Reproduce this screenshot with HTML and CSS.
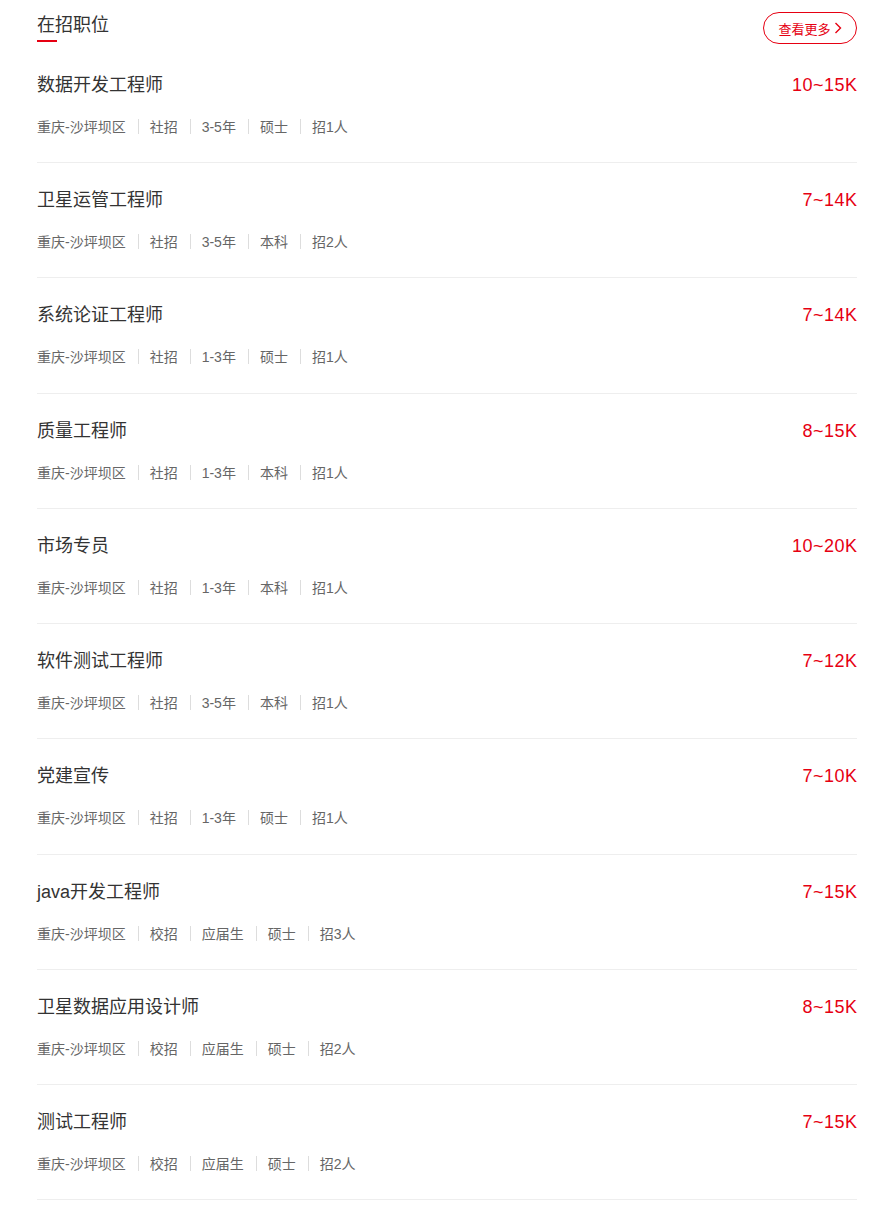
FILE: index.html
```html
<!DOCTYPE html>
<html lang="zh-CN">
<head>
  <meta charset="UTF-8">
  <title>在招职位</title>
  <link rel="stylesheet" href="styles.css">
</head>
<body>
  <div class="jobs">
    <div class="jobs-head">
      <h2 class="jobs-title">在招职位</h2>
      <a class="more-btn" href="#">查看更多
        <svg width="8" height="12" viewBox="0 0 8 12"><path d="M1.5 1 L6.5 6 L1.5 11" fill="none" stroke="#e60012" stroke-width="1.4"/></svg>
      </a>
    </div>

    <div class="job">
      <div class="job-top"><span class="job-name">数据开发工程师</span><span class="job-pay">10~15K</span></div>
      <div class="job-meta"><span>重庆-沙坪坝区</span><span>社招</span><span>3-5年</span><span>硕士</span><span>招1人</span></div>
    </div>
    <div class="job">
      <div class="job-top"><span class="job-name">卫星运管工程师</span><span class="job-pay">7~14K</span></div>
      <div class="job-meta"><span>重庆-沙坪坝区</span><span>社招</span><span>3-5年</span><span>本科</span><span>招2人</span></div>
    </div>
    <div class="job">
      <div class="job-top"><span class="job-name">系统论证工程师</span><span class="job-pay">7~14K</span></div>
      <div class="job-meta"><span>重庆-沙坪坝区</span><span>社招</span><span>1-3年</span><span>硕士</span><span>招1人</span></div>
    </div>
    <div class="job">
      <div class="job-top"><span class="job-name">质量工程师</span><span class="job-pay">8~15K</span></div>
      <div class="job-meta"><span>重庆-沙坪坝区</span><span>社招</span><span>1-3年</span><span>本科</span><span>招1人</span></div>
    </div>
    <div class="job">
      <div class="job-top"><span class="job-name">市场专员</span><span class="job-pay">10~20K</span></div>
      <div class="job-meta"><span>重庆-沙坪坝区</span><span>社招</span><span>1-3年</span><span>本科</span><span>招1人</span></div>
    </div>
    <div class="job">
      <div class="job-top"><span class="job-name">软件测试工程师</span><span class="job-pay">7~12K</span></div>
      <div class="job-meta"><span>重庆-沙坪坝区</span><span>社招</span><span>3-5年</span><span>本科</span><span>招1人</span></div>
    </div>
    <div class="job">
      <div class="job-top"><span class="job-name">党建宣传</span><span class="job-pay">7~10K</span></div>
      <div class="job-meta"><span>重庆-沙坪坝区</span><span>社招</span><span>1-3年</span><span>硕士</span><span>招1人</span></div>
    </div>
    <div class="job">
      <div class="job-top"><span class="job-name">java开发工程师</span><span class="job-pay">7~15K</span></div>
      <div class="job-meta"><span>重庆-沙坪坝区</span><span>校招</span><span>应届生</span><span>硕士</span><span>招3人</span></div>
    </div>
    <div class="job">
      <div class="job-top"><span class="job-name">卫星数据应用设计师</span><span class="job-pay">8~15K</span></div>
      <div class="job-meta"><span>重庆-沙坪坝区</span><span>校招</span><span>应届生</span><span>硕士</span><span>招2人</span></div>
    </div>
    <div class="job">
      <div class="job-top"><span class="job-name">测试工程师</span><span class="job-pay">7~15K</span></div>
      <div class="job-meta"><span>重庆-沙坪坝区</span><span>校招</span><span>应届生</span><span>硕士</span><span>招2人</span></div>
    </div>
  </div>
</body>
</html>
```

FILE: styles.css
```css
body {
  margin: 0;
  background: #fff;
  font-family: "Liberation Sans", "Noto Sans CJK SC", sans-serif;
  color: #333;
}
.jobs {
  width: 820px;
  margin-left: 37px;
}
.jobs-head {
  height: 48px;
  display: flex;
  justify-content: space-between;
  align-items: flex-start;
}
.jobs-title {
  margin: 0;
  padding-top: 13px;
  font-size: 18px;
  font-weight: normal;
  line-height: 24px;
  position: relative;
}
.jobs-title::after {
  content: "";
  position: absolute;
  left: 0;
  top: 40px;
  width: 20px;
  height: 2px;
  background: #e60012;
}
.more-btn {
  margin-top: 12px;
  box-sizing: border-box;
  height: 32px;
  width: 94px;
  border: 1px solid #e60012;
  border-radius: 16px;
  display: flex;
  align-items: center;
  justify-content: center;
  gap: 3px;
  color: #e60012;
  font-size: 13px;
  text-decoration: none;
}
.job {
  padding: 25px 0 25.22px;
  border-bottom: 1px solid #eee;
}
.job-top {
  display: flex;
  justify-content: space-between;
  font-size: 18px;
  line-height: 24px;
}
.job-pay {
  color: #e60012;
  letter-spacing: 0.5px;
  margin-right: -0.5px;
}
.job-meta {
  margin-top: 20px;
  font-size: 14px;
  line-height: 20px;
  color: #666;
  display: flex;
  align-items: center;
}
.job-meta span + span::before {
  content: "";
  display: inline-block;
  width: 1px;
  height: 15px;
  background: #ddd;
  margin: 0 11px 0 12px;
  vertical-align: -2px;
}
```
